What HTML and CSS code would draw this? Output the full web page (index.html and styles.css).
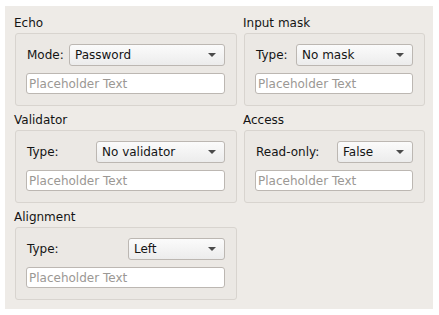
FILE: index.html
```html
<!DOCTYPE html>
<html lang="en">
<head>
    <meta charset="UTF-8">
    <title>Line Edits</title>
    <link rel="stylesheet" href="styles.css">
</head>
<body>
<div class="window">
    <div class="grid">
        <section class="group">
            <div class="group-title">Echo</div>
            <div class="group-box">
                <div class="field-row">
                    <span class="field-label">Mode:</span>
                    <div class="combo combo-echo">Password<span class="arrow"></span></div>
                </div>
                <input class="line-edit" type="text" placeholder="Placeholder Text">
            </div>
        </section>

        <section class="group">
            <div class="group-title">Input mask</div>
            <div class="group-box">
                <div class="field-row">
                    <span class="field-label">Type:</span>
                    <div class="combo combo-mask">No mask<span class="arrow"></span></div>
                </div>
                <input class="line-edit" type="text" placeholder="Placeholder Text">
            </div>
        </section>

        <section class="group">
            <div class="group-title">Validator</div>
            <div class="group-box">
                <div class="field-row">
                    <span class="field-label">Type:</span>
                    <div class="combo combo-validator">No validator<span class="arrow"></span></div>
                </div>
                <input class="line-edit" type="text" placeholder="Placeholder Text">
            </div>
        </section>

        <section class="group">
            <div class="group-title">Access</div>
            <div class="group-box">
                <div class="field-row">
                    <span class="field-label">Read-only:</span>
                    <div class="combo combo-access">False<span class="arrow"></span></div>
                </div>
                <input class="line-edit" type="text" placeholder="Placeholder Text">
            </div>
        </section>

        <section class="group">
            <div class="group-title">Alignment</div>
            <div class="group-box">
                <div class="field-row">
                    <span class="field-label">Type:</span>
                    <div class="combo combo-align">Left<span class="arrow"></span></div>
                </div>
                <input class="line-edit" type="text" placeholder="Placeholder Text">
            </div>
        </section>
    </div>
</div>
</body>
</html>
```

FILE: styles.css
```css
body {
    margin: 0;
    background-color: #ffffff;
    font-family: 'DejaVu Sans', Verdana, sans-serif;
    font-size: 12px;
    color: #141414;
}

/* Main window */
.window {
    margin: 6px 0 0 5px;
    width: 428px;
    height: 303px;
    box-sizing: border-box;
    padding: 3px 0 0 10px;
    background-color: #eeebe7;
}

.grid {
    display: grid;
    grid-template-columns: 222px 181px;
    column-gap: 7px;
}

/* Group boxes */
.group-title {
    height: 24px;
    box-sizing: border-box;
    padding: 6px 0 0 0;
    margin-left: -1px;
    line-height: 16px;
}

.group-box {
    height: 73px;
    box-sizing: border-box;
    padding: 10px 11px 0 10px;
    border: 1px solid #d8d4cf;
    border-radius: 3px;
    background-color: #ebe8e4;
}

.field-row {
    display: flex;
    align-items: center;
    justify-content: space-between;
    height: 22px;
    margin-bottom: 7px;
}

.field-label {
    padding-left: 1px;
}

/* Combo boxes */
.combo {
    position: relative;
    height: 22px;
    box-sizing: border-box;
    padding: 0 0 0 5px;
    line-height: 20px;
    border: 1px solid #bcb7b2;
    border-radius: 3px;
    background: linear-gradient(#fbfbfb, #ececec);
    color: #141414;
}

.combo .arrow {
    position: absolute;
    right: 8px;
    top: 8px;
    width: 0;
    height: 0;
    border-left: 4px solid transparent;
    border-right: 4px solid transparent;
    border-top: 4px solid #4b4b4b;
}

.combo-echo { width: 156px; }
.combo-mask { width: 117px; }
.combo-validator { width: 129px; }
.combo-access { width: 76px; }
.combo-align { width: 97px; }

/* Line edits */
.line-edit {
    display: block;
    width: 100%;
    height: 21px;
    box-sizing: border-box;
    margin: 0;
    padding: 0 2px;
    border: 1px solid #bcb7b2;
    border-radius: 3px;
    background-color: #ffffff;
    font-family: 'DejaVu Sans', Verdana, sans-serif;
    font-size: 12px;
    color: #141414;
    outline: none;
}

.line-edit::placeholder {
    color: #9b9894;
    opacity: 1;
}
```
